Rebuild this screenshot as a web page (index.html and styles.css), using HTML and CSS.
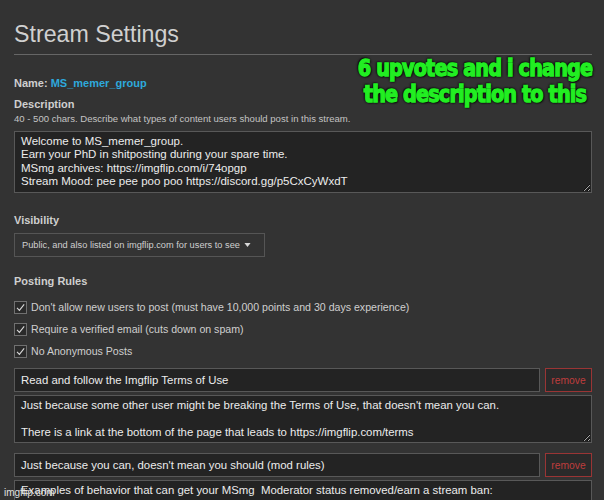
FILE: index.html
```html
<!DOCTYPE html>
<html lang="en">
<head>
<meta charset="utf-8">
<title>Stream Settings</title>
<link rel="stylesheet" href="styles.css">
</head>
<body>
<div class="page">
  <h1 class="title">Stream Settings</h1>
  <hr class="rule">

  <div class="name-row"><b>Name:</b> <a class="stream-link" href="#">MS_memer_group</a></div>

  <div class="label">Description</div>
  <div class="hint">40 - 500 chars. Describe what types of content users should post in this stream.</div>
  <textarea class="box desc" readonly spellcheck="false">Welcome to MS_memer_group.
Earn your PhD in shitposting during your spare time.
MSmg archives: https://imgflip.com/i/74opgp
Stream Mood: pee pee poo poo https://discord.gg/p5CxCyWxdT</textarea>

  <div class="label vis-label">Visibility</div>
  <div class="select">Public, and also listed on imgflip.com for users to see <svg class="caret" viewBox="0 0 8 6"><path d="M0.5 0.8 H7.5 L4 5.2 Z"/></svg></div>

  <div class="label rules-label">Posting Rules</div>
  <ul class="checks">
    <li><span class="check"><svg viewBox="0 0 12 12"><path d="M2.2 6.4 L4.8 9.2 L10 2.6" /></svg></span>Don't allow new users to post (must have 10,000 points and 30 days experience)</li>
    <li><span class="check"><svg viewBox="0 0 12 12"><path d="M2.2 6.4 L4.8 9.2 L10 2.6" /></svg></span>Require a verified email (cuts down on spam)</li>
    <li><span class="check"><svg viewBox="0 0 12 12"><path d="M2.2 6.4 L4.8 9.2 L10 2.6" /></svg></span>No Anonymous Posts</li>
  </ul>

  <div class="rule-item">
    <div class="rule-head">
      <div class="box rule-title">Read and follow the Imgflip Terms of Use</div>
      <button class="remove">remove</button>
    </div>
    <textarea class="box rule-body" readonly spellcheck="false">Just because some other user might be breaking the Terms of Use, that doesn't mean you can.

There is a link at the bottom of the page that leads to https://imgflip.com/terms</textarea>
  </div>

  <div class="rule-item">
    <div class="rule-head">
      <div class="box rule-title">Just because you can, doesn't mean you should (mod rules)</div>
      <button class="remove">remove</button>
    </div>
    <textarea class="box rule-body" readonly spellcheck="false">Examples of behavior that can get your MSmg  Moderator status removed/earn a stream ban:</textarea>
  </div>

  <div class="caption">6 upvotes and i change<br>the description to this</div>
  <div class="watermark">imgflip.com</div>
</div>
</body>
</html>
```

FILE: styles.css
```css
html, body {
  margin: 0;
  padding: 0;
  background: #333333;
  height: 100%;
  overflow: hidden;
}

.page {
  position: relative;
  padding: 0 12px 0 14px;
  font-family: "Liberation Sans", Arial, sans-serif;
  color: #cfcfcf;
}

.title {
  margin: 0;
  padding-top: 20px;
  font-size: 23.2px;
  font-weight: normal;
  line-height: 28px;
  color: #d0d0d0;
}

.rule {
  margin: 6px 0 0;
  border: 0;
  border-top: 1px solid #666;
}

.name-row {
  margin-top: 22px;
  font-size: 11px;
  line-height: 13px;
  font-weight: bold;
}

.stream-link {
  color: #2ea9dc;
  text-decoration: none;
}

.label {
  font-size: 11px;
  line-height: 13px;
  font-weight: bold;
  margin-top: 8px;
}

.hint {
  font-size: 9.55px;
  line-height: 12px;
  margin-top: 2px;
  color: #c4c4c4;
}

.box {
  box-sizing: border-box;
  display: block;
  width: 100%;
  background: #232323;
  border: 1px solid #585858;
  color: #ececec;
  font-family: "Liberation Sans", Arial, sans-serif;
  font-size: 11.5px;
  line-height: 13.4px;
  margin: 0;
  outline: none;
}

textarea.box {
  resize: vertical;
  overflow: hidden;
  padding: 3px 6px;
}

.desc {
  margin-top: 6px;
  height: 62px;
}

.vis-label {
  margin-top: 21px;
}

.select {
  display: inline-flex;
  align-items: center;
  margin-top: 6px;
  box-sizing: border-box;
  width: 251px;
  height: 24px;
  padding: 0 0 0 7px;
  border: 1px solid #555;
  font-size: 9.25px;
  color: #cfcfcf;
}

.caret {
  width: 7px;
  height: 6px;
  margin-left: 4px;
  fill: #d8d8d8;
}

.rules-label {
  margin-top: 18px;
}

.checks {
  list-style: none;
  margin: 8px 0 0;
  padding: 0;
}

.checks li {
  display: flex;
  align-items: center;
  height: 22px;
  font-size: 10.6px;
  color: #cfcfcf;
}

.check {
  box-sizing: border-box;
  width: 13px;
  height: 13px;
  border: 1px solid #707070;
  background: #2a2a2a;
  margin-right: 4px;
  display: flex;
  align-items: center;
  justify-content: center;
}

.check svg {
  width: 11px;
  height: 11px;
  fill: none;
  stroke: #d8d8d8;
  stroke-width: 1.2;
}

.rule-item {
  margin-top: 10px;
}

.checks + .rule-item {
  margin-top: 6px;
}

.rule-head {
  display: flex;
  gap: 5px;
  height: 24px;
}

.rule-title {
  flex: 1;
  padding: 0 6px;
  line-height: 22px;
  font-size: 11.4px;
}

.remove {
  box-sizing: border-box;
  width: 47px;
  background: #2a2a2a;
  border: 1px solid #9a3535;
  color: #bf3d3d;
  font-family: "Liberation Sans", Arial, sans-serif;
  font-size: 10.3px;
  padding: 0;
}

.rule-body {
  margin-top: 3px;
  height: 48px;
  font-size: 11.4px;
}

/* meme caption laid over the form */
.caption {
  position: absolute;
  top: 55px;
  left: 340px;
  width: 270px;
  text-align: center;
  font-family: "DejaVu Sans Condensed", "Liberation Sans Narrow", "DejaVu Sans", sans-serif;
  font-stretch: condensed;
  font-weight: bold;
  font-size: 23px;
  line-height: 26px;
  color: #22ee22;
  letter-spacing: -0.9px;
  transform: scaleX(0.93);
  transform-origin: 50% 0;
  -webkit-text-stroke: 1.3px #22ee22;
  text-shadow: 0 0 2px #000, 0 0 3px #000, 1px 1px 2px #000, -1px -1px 2px #000;
}

.watermark {
  position: absolute;
  top: 487px;
  left: 4px;
  font-size: 10px;
  line-height: 12px;
  color: #e0e0e0;
}
```
